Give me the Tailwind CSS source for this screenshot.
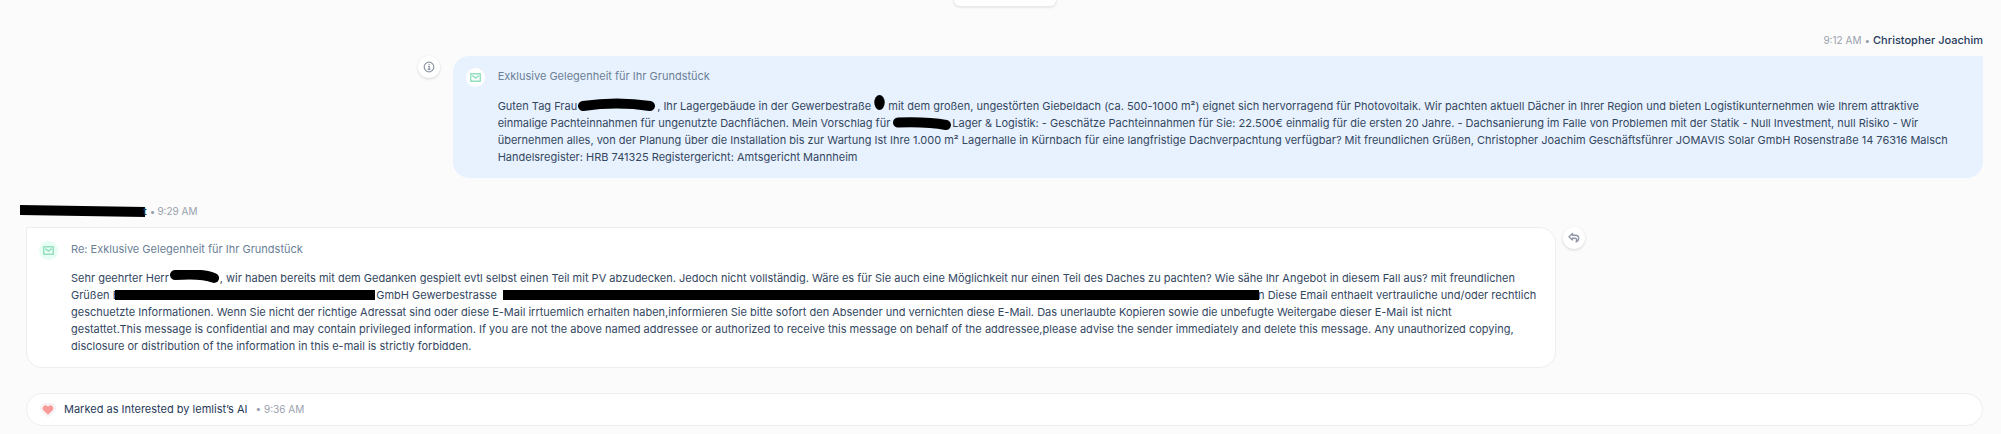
<!DOCTYPE html>
<html lang="de">
<head>
<meta charset="utf-8">
<meta name="viewport" content="width=device-width, initial-scale=1">
<title>Conversation</title>
<script src="https://cdn.jsdelivr.net/npm/@tailwindcss/browser@4"></script>
</head>
<body class="min-h-screen overflow-x-hidden bg-[#fbfbfb] pl-[26px] pr-[18px] font-['Inter',sans-serif] text-[11px] leading-[17px] text-[#33475f]">
<div class="mx-auto h-[6px] w-[102px] rounded-b-xl bg-white shadow-[0_1px_2px_1px_rgba(0,0,0,0.08)]"></div>

<main class="pt-[26px]">
  <section class="flex flex-col items-end">
    <header class="flex gap-[3px] pb-[7px]">
      <time class="text-[10px] text-[#9aa1ad]">9:12 AM</time>
      <span class="text-[10px] text-[#9aa1ad]">•</span>
      <span class="font-medium text-[#1f3a5a]">Christopher Joachim</span>
    </header>
    <div class="flex w-full items-start justify-end gap-[13px]">
      <button type="button" aria-label="Info" class="flex size-[22px] shrink-0 items-center justify-center rounded-full bg-white shadow-[0_1px_3px_rgba(0,0,0,0.15)]">
        <svg class="size-3" viewBox="0 0 12 12" fill="none" stroke="#8f96a5" stroke-width="1.2"><circle cx="6" cy="6" r="4.8"/><path d="M5 5.3h1.2v3M4.6 8.4h3"/><path d="M5.500 3.500h1.200"/></svg>
      </button>
      <article class="flex w-[78.2%] items-start gap-[13px] rounded-2xl rounded-tr-none bg-[#e8f2ff] pb-3 pl-[13px] pr-3 pt-3">
        <span class="flex size-[19px] shrink-0 items-center justify-center rounded-full bg-white">
          <svg class="h-[9px] w-[11px]" viewBox="0 0 11 9" fill="none" stroke="#93dfc0" stroke-width="1.5"><rect x=".7" y=".7" width="9.6" height="7.6" rx=".6"/><path d="M2.300 2.600 5.500 5l3.200-2.400"/></svg>
        </span>
        <div class="whitespace-nowrap">
          <h2 class="mb-[13px] text-[#6b7f96]">Exklusive Gelegenheit für Ihr Grundstück</h2>
          <p>Guten Tag Frau<span class="relative inline-block h-2 w-20"><svg class="absolute left-0 -top-1 h-[14px] w-[79px]" viewBox="0 0 79 14"><path d="M6 8Q40 3 73 8" fill="none" stroke="#000" stroke-width="10" stroke-linecap="round"/></svg></span>, Ihr Lagergebäude in der Gewerbestraße<span class="relative inline-block h-2 w-[14px]"><svg class="absolute left-[3px] -top-[7px] h-[15px] w-[11px]" viewBox="0 0 11 15"><ellipse cx="5.5" cy="7.5" rx="5.2" ry="7.5"/></svg></span> mit dem großen, ungestörten Giebeldach (ca. 500-1000 m²) eignet sich hervorragend für Photovoltaik. Wir pachten aktuell Dächer in Ihrer Region und bieten Logistikunternehmen wie Ihrem attraktive<br>
          einmalige Pachteinnahmen für ungenutzte Dachflächen. Mein Vorschlag für<span class="relative inline-block h-2 w-[62px]"><svg class="absolute left-[3px] -top-[2px] h-[13px] w-[58px]" viewBox="0 0 58 13"><path d="M5 5.500Q35 4.500 53 8" fill="none" stroke="#000" stroke-width="10" stroke-linecap="round"/></svg></span>Lager &amp; Logistik: - Geschätze Pachteinnahmen für Sie: 22.500€ einmalig für die ersten 20 Jahre. - Dachsanierung im Falle von Problemen mit der Statik - Null Investment, null Risiko - Wir<br>
          übernehmen alles, von der Planung über die Installation bis zur Wartung Ist Ihre 1.000 m² Lagerhalle in Kürnbach für eine langfristige Dachverpachtung verfügbar? Mit freundlichen Grüßen, Christopher Joachim Geschäftsführer JOMAVIS Solar GmbH Rosenstraße 14 76316 Malsch<br>
          Handelsregister: HRB 741325 Registergericht: Amtsgericht Mannheim</p>
        </div>
      </article>
    </div>
  </section>

  <section class="mt-[25px]">
    <header class="flex items-center gap-[2px] pb-[7px]">
      <span class="-ml-[6px] flex items-center font-medium text-[#1f3a5a]"><svg class="-mr-[2px] h-[13px] w-[125px]" viewBox="0 0 125 13"><path d="M0 0 125 2v10L0 10z"/></svg>t</span>
      <span class="ml-px text-[10px] text-[#9aa1ad]">•</span>
      <time class="text-[10px] text-[#9aa1ad]">9:29 AM</time>
    </header>
    <div class="flex items-start gap-[7px]">
      <article class="flex w-[78.2%] items-start gap-[13px] rounded-2xl rounded-tl-none border border-[#eeeeee] bg-white px-3 pb-3 pt-[13px]">
        <span class="flex size-[19px] shrink-0 items-center justify-center rounded-full bg-[#e8fdf4]">
          <svg class="h-[9px] w-[11px]" viewBox="0 0 11 9" fill="none" stroke="#93dfc0" stroke-width="1.5"><rect x=".7" y=".7" width="9.6" height="7.6" rx=".6"/><path d="M2.300 2.600 5.500 5l3.200-2.400"/></svg>
        </span>
        <div class="whitespace-nowrap">
          <h2 class="mb-3 text-[#6b7f96]">Re: Exklusive Gelegenheit für Ihr Grundstück</h2>
          <p>Sehr geehrter Herr<span class="relative inline-block h-2 w-[51px]"><svg class="absolute left-px -top-1 h-[14px] w-[49px]" viewBox="0 0 49 14"><path d="M5 5Q32 3 44 8" fill="none" stroke="#000" stroke-width="10" stroke-linecap="round"/></svg></span>, wir haben bereits mit dem Gedanken gespielt evtl selbst einen Teil mit PV abzudecken. Jedoch nicht vollständig. Wäre es für Sie auch eine Möglichkeit nur einen Teil des Daches zu pachten? Wie sähe Ihr Angebot in diesem Fall aus? mit freundlichen<br>
          Grüßen E<span class="relative inline-block h-2 w-[257px]"><span class="absolute -left-[4px] -top-px h-[10px] w-[260px] bg-black"></span></span>GmbH Gewerbestrasse <span class="relative inline-block h-2 w-[758px]"><span class="absolute left-[3px] -top-px h-[10px] w-[756px] bg-black"></span></span>n Diese Email enthaelt vertrauliche und/oder rechtlich<br>
          geschuetzte Informationen. Wenn Sie nicht der richtige Adressat sind oder diese E-Mail irrtuemlich erhalten haben,informieren Sie bitte sofort den Absender und vernichten diese E-Mail. Das unerlaubte Kopieren sowie die unbefugte Weitergabe dieser E-Mail ist nicht<br>
          gestattet.This message is confidential and may contain privileged information. If you are not the above named addressee or authorized to receive this message on behalf of the addressee,please advise the sender immediately and delete this message. Any unauthorized copying,<br>
          disclosure or distribution of the information in this e-mail is strictly forbidden.</p>
        </div>
      </article>
      <button type="button" aria-label="Reply" class="flex size-[22px] shrink-0 items-center justify-center rounded-full bg-white shadow-[0_1px_3px_rgba(0,0,0,0.15)]">
        <svg class="size-3" viewBox="0 0 12 12" fill="none" stroke="#8f96a5" stroke-width="1.4" stroke-linejoin="round"><path d="M4.500 1.500 1 4.700l3.500 3.200V6.200h2.700c1.500 0 1.800 1.800.9 3.700 3.300-1.700 3.700-6.500-.6-6.700h-3z"/></svg>
      </button>
    </div>
  </section>

  <section class="mt-[25px] flex items-center rounded-full border border-[#eeeeee] bg-white py-[7px] pl-[13px]">
    <svg class="mr-2 h-[14px] w-4" viewBox="0 0 16 14"><path d="M8 13.500 1.500 7.500C-1 3.500 3-.5 8 1.200c5-1.700 9 2.300 6.500 6.300z" fill="#fff" stroke="#e6e6e9"/><path d="M8 11.800 3.200 7.200C1 4 5.300.4 8 3.400c2.700-3 7 .6 4.800 3.800z" fill="#f99a9a"/></svg>
    <span class="text-[#1f3a5a]">Marked as Interested by lemlist’s AI</span>
    <span class="ml-2 text-[10px] text-[#9aa1ad]">• <time>9:36 AM</time></span>
  </section>
</main>
</body>
</html>
